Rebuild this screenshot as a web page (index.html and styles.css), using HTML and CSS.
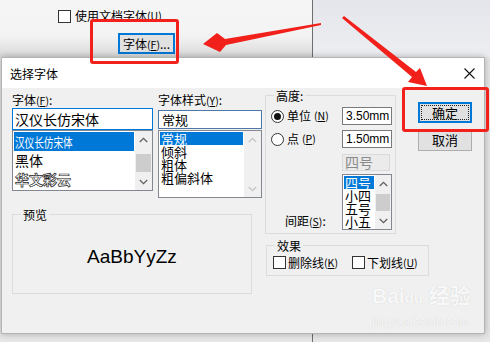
FILE: index.html
```html
<!DOCTYPE html>
<html lang="zh-CN">
<head>
<meta charset="utf-8">
<title>选择字体</title>
<link rel="stylesheet" href="styles.css">
</head>
<body>
<div class="desk">
  <div class="desk-left">
    <div class="top-check"><span class="cb"></span>使用文档字体<span class="acc">(<u>U</u>)</span></div>
    <div class="btn-row"><button class="btn-font">字体<span class="acc">(<u>F</u>)</span>...</button></div>
  </div>
  <div class="desk-right"></div>
</div>

<div class="dialog">
  <div class="titlebar">
    <span>选择字体</span>
    <svg class="close" width="11" height="11" viewBox="0 0 11 11"><path d="M0.5 0.5L10.5 10.5M10.5 0.5L0.5 10.5" stroke="#111" stroke-width="1.1" fill="none"/></svg>
  </div>
  <div class="dbody">
    <div class="left">
      <div class="lists">
        <div class="col1">
          <div class="flabel">字体<span class="acc">(<u>F</u>)</span>:</div>
          <div class="input in1">汉仪长仿宋体</div>
          <div class="list l1">
            <div class="items">
              <div class="item sel"><span class="narrow">汉仪长仿宋体</span></div>
              <div class="item">黑体</div>
              <div class="item hollow">华文彩云</div>
            </div>
            <div class="sb">
              <div class="sb-btn"><svg width="9" height="6" viewBox="0 0 9 6"><path d="M0.8 5L4.5 1.3L8.2 5" stroke="#606060" stroke-width="1.3" fill="none"/></svg></div>
              <div class="sb-track"><div class="thumb t1"></div></div>
              <div class="sb-btn"><svg width="9" height="6" viewBox="0 0 9 6"><path d="M0.8 1L4.5 4.7L8.2 1" stroke="#606060" stroke-width="1.3" fill="none"/></svg></div>
            </div>
          </div>
        </div>
        <div class="col2">
          <div class="flabel">字体样式<span class="acc">(<u>Y</u>)</span>:</div>
          <div class="input in2">常规</div>
          <div class="list l2">
            <div class="items">
              <div class="item sel">常规</div>
              <div class="item">倾斜</div>
              <div class="item">粗体</div>
              <div class="item">粗偏斜体</div>
            </div>
            <div class="sb">
              <div class="sb-btn"><svg width="9" height="6" viewBox="0 0 9 6"><path d="M0.8 5L4.5 1.3L8.2 5" stroke="#c4c4c4" stroke-width="1.3" fill="none"/></svg></div>
              <div class="sb-track"></div>
              <div class="sb-btn"><svg width="9" height="6" viewBox="0 0 9 6"><path d="M0.8 1L4.5 4.7L8.2 1" stroke="#c4c4c4" stroke-width="1.3" fill="none"/></svg></div>
            </div>
          </div>
        </div>
      </div>
      <div class="group preview">
        <div class="glabel">预览</div>
        <div class="preview-text">AaBbYyZz</div>
      </div>
    </div>

    <div class="right">
      <div class="hrow">
        <div class="group hgroup">
          <div class="glabel">高度:</div>
          <div class="hgrid">
            <div class="opt"><span class="radio on"></span>单位<span class="acc">(<u>N</u>)</span></div>
            <div class="num">3.50mm</div>
            <div class="opt r2row"><span class="radio"></span>点<span class="acc">(<u>P</u>)</span></div>
            <div class="num r2row">1.50mm</div>
            <div></div>
            <div class="dis">四号</div>
            <div class="spacing">间距<span class="acc">(<u>S</u>)</span>:</div>
            <div class="list slist">
              <div class="items">
                <div class="item sel">四号</div>
                <div class="item">小四</div>
                <div class="item">五号</div>
                <div class="item">小五</div>
              </div>
              <div class="sb">
                <div class="sb-btn"><svg width="9" height="6" viewBox="0 0 9 6"><path d="M0.8 5L4.5 1.3L8.2 5" stroke="#606060" stroke-width="1.3" fill="none"/></svg></div>
                <div class="sb-track"><div class="thumb t3"></div></div>
                <div class="sb-btn"><svg width="9" height="6" viewBox="0 0 9 6"><path d="M0.8 1L4.5 4.7L8.2 1" stroke="#606060" stroke-width="1.3" fill="none"/></svg></div>
              </div>
            </div>
          </div>
        </div>
        <div class="buttons">
          <button class="dbtn ok">确定</button>
          <button class="dbtn cancel">取消</button>
        </div>
      </div>
      <div class="group effects">
        <div class="glabel">效果</div>
        <div class="echecks">
          <div class="ec"><span class="cb"></span>删除线<span class="acc">(<u>K</u>)</span></div>
          <div class="ec"><span class="cb"></span>下划线<span class="acc">(<u>U</u>)</span></div>
        </div>
      </div>
    </div>
  </div>
</div>

<div class="redbox rb1"></div>
<div class="redbox rb2"></div>

<svg class="arrows" width="490" height="342" viewBox="0 0 490 342">
  <polygon points="321,23 225,39 217,33 203,44 220,52 226,45 321,25" fill="#f2201a"/>
  <polygon points="342,18 344,16 416,72 420,68 427,86 408,82 412,77" fill="#f2201a"/>
</svg>

<div class="watermark">
  <div class="wm-logo">Bai<span class="paw">du</span> 经验</div>
  <div class="wm-url">jingyan.baidu.com</div>
</div>
</body>
</html>
```
FILE: styles.css
```css
* { box-sizing: border-box; margin: 0; padding: 0; }
html, body { width: 490px; height: 342px; overflow: hidden; }
body {
  position: relative;
  font-family: "Noto Sans CJK SC", "Noto Sans", sans-serif;
  font-size: 12px;
  color: #000;
  background: #e8e8e8;
}
button { font-family: inherit; color: #000; cursor: default; }
.acc { font-size: 10.5px; }
.acc u { text-decoration-thickness: 1px; text-underline-offset: 1px; }

/* desktop behind the dialog */
.desk { display: flex; height: 342px; }
.desk-left {
  width: 313px;
  border-right: 1px solid #6e6e6e;
  background: linear-gradient(#f6f6f6 0, #f3f3f3 36px, #d9d9d9 57px, #e7e7e7 57px);
}
.desk-right {
  flex: 1;
  background: linear-gradient(#e4e6eb 0, #eceef2 57px, #e7e7e7 57px);
}
.top-check {
  display: flex;
  align-items: center;
  padding: 9px 0 0 58px;
  height: 23px;
  line-height: 14px;
}
.cb {
  width: 13px;
  height: 13px;
  border: 1px solid #333;
  background: #fff;
  margin-right: 4px;
  flex: none;
}
.btn-row { padding-left: 118px; margin-top: 10px; }
.btn-font {
  width: 57px;
  height: 21px;
  border: 2px solid #0078d7;
  background: #e1e1e1;
  font-size: 12px;
  line-height: 15px;
}

/* dialog window */
.dialog {
  position: absolute;
  left: 1px;
  top: 57px;
  width: 484px;
  height: 277px;
  border: 1px solid #b4b4b4;
  background: #f0f0f0;
  box-shadow: 0 0 7px rgba(0, 0, 0, 0.28);
  display: flex;
  flex-direction: column;
}
.titlebar {
  height: 30px;
  flex: none;
  background: #fff;
  display: flex;
  align-items: center;
  justify-content: space-between;
  padding: 0 9px 0 8px;
  font-size: 12px;
}
.dbody { display: flex; padding-left: 10px; flex: 1; }

.left { width: 250px; display: flex; flex-direction: column; }
.lists { display: flex; gap: 5px; }
.col1 { width: 141px; }
.col2 { width: 104px; }
.flabel { padding-top: 4px; height: 20px; line-height: 16px; }
.input {
  background: #fff;
  border: 1px solid #0078d7;
  padding-left: 2px;
}
.in1 { height: 22px; font-size: 14px; line-height: 20px; }
.in2 { margin-top: 2px; height: 19px; font-size: 13px; line-height: 17px; border-color: #4f78a8; padding-left: 3px; }

.list { background: #fff; border: 1px solid #828790; display: flex; }
.l1 { height: 61px; }
.l2 { height: 68px; margin-top: 1px; }
.items { flex: 1; min-width: 0; padding: 1px 1px 0 1px; overflow: hidden; }
.item { white-space: nowrap; }
.l1 .item { font-size: 14px; line-height: 19px; height: 19px; padding-left: 1px; }
.l2 .item { font-size: 13px; line-height: 13px; height: 13px; padding-left: 1px; }
.slist .item { font-size: 13px; line-height: 13px; height: 13px; padding-left: 1px; }
.sel { background: #0078d7; color: #fff; }
.narrow { display: inline-block; transform: scaleX(0.74); transform-origin: left center; font-size: 13px; }
.hollow { color: #fff; -webkit-text-stroke: 0.7px #222; font-weight: bold; }

.sb { width: 17px; flex: none; display: flex; flex-direction: column; background: #f0f0f0; }
.slist .sb { width: 16px; }
.sb-btn { height: 17px; flex: none; display: flex; align-items: center; justify-content: center; }
.sb-track { flex: 1; display: flex; flex-direction: column; }
.thumb { background: #cdcdcd; margin: 0 1px; }
.t1 { margin-top: 6px; height: 18px; }
.t3 { margin-top: 2px; height: 17px; }

/* group boxes */
.group { border: 1px solid #dcdcdc; display: flex; flex-direction: column; }
.glabel {
  width: max-content;
  margin: -7px 0 0 8px;
  padding: 0 2px;
  background: #f0f0f0;
  line-height: 14px;
  height: 14px;
}
.preview { margin-top: 16px; width: 240px; height: 80px; }
.preview-text {
  flex: 1;
  display: flex;
  align-items: center;
  justify-content: center;
  font-family: "Liberation Sans", Arial, sans-serif;
  font-size: 19px;
  padding-bottom: 2px;
}

.right { margin-left: 3px; display: flex; flex-direction: column; }
.hrow { display: flex; }
.hgroup { margin-top: 7px; width: 131px; height: 139px; }
.hgrid { display: grid; grid-template-columns: 76px 50px; padding-top: 4px; }
.opt { display: flex; align-items: center; gap: 3px; padding-left: 5px; height: 18px; line-height: 14px; }
.radio {
  width: 13px;
  height: 13px;
  border: 1px solid #333;
  border-radius: 50%;
  background: #fff;
  display: flex;
  align-items: center;
  justify-content: center;
  flex: none;
}
.radio.on::after { content: ""; width: 7px; height: 7px; border-radius: 50%; background: #111; }
.num {
  height: 18px;
  border: 1px solid #7a7a7a;
  background: #fff;
  font-family: "Liberation Sans", Arial, sans-serif;
  font-size: 12px;
  line-height: 16px;
  padding-left: 3px;
}
.r2row { margin-top: 5px; }
.dis {
  margin-top: 6px;
  width: 48px;
  height: 17px;
  border: 1px solid #dadada;
  background: #ebebeb;
  color: #8a8a8a;
  font-size: 14px;
  line-height: 15px;
  padding-left: 2px;
}
.spacing { align-self: end; padding-left: 19px; line-height: 14px; margin-bottom: 1px; }
.slist { margin-top: 3px; height: 56px; }

.buttons { margin: 14px 0 0 22px; width: 54px; display: flex; flex-direction: column; }
.dbtn {
  background: #e1e1e1;
  font-size: 13px;
  display: flex;
  align-items: center;
  justify-content: center;
}
.ok { height: 21px; border: 2px solid #0078d7; position: relative; line-height: 15px; }
.ok::after { content: ""; position: absolute; inset: 1px; border: 1px dotted #222; }
.cancel { margin-top: 6px; height: 22px; border: 1px solid #adadad; line-height: 18px; }

.effects { margin: 11px 0 0 1px; width: 163px; height: 31px; }
.echecks { display: flex; gap: 14px; padding: 3px 0 0 6px; }
.ec { display: flex; align-items: center; line-height: 13px; }
.ec .cb { margin-right: 2px; }

/* annotations drawn over the screenshot */
.redbox { position: absolute; border: 3px solid #f2211b; border-radius: 3px; }
.rb1 { left: 90px; top: 19px; width: 89px; height: 45px; }
.rb2 { left: 402px; top: 87px; width: 87px; height: 45px; }
.arrows { position: absolute; left: 0; top: 0; pointer-events: none; }

.watermark {
  position: absolute;
  left: 372px;
  top: 284px;
  color: #f8f8f8;
  text-shadow: 0 0 1px rgba(0, 0, 0, 0.16);
  font-family: "Liberation Sans", Arial, sans-serif;
}
.wm-logo { font-size: 21px; font-weight: bold; line-height: 24px; font-family: "Liberation Sans", "Noto Sans CJK SC", sans-serif; }
.paw { font-size: 15px; }
.wm-url { font-size: 12px; line-height: 16px; margin-top: 4px; }
```
